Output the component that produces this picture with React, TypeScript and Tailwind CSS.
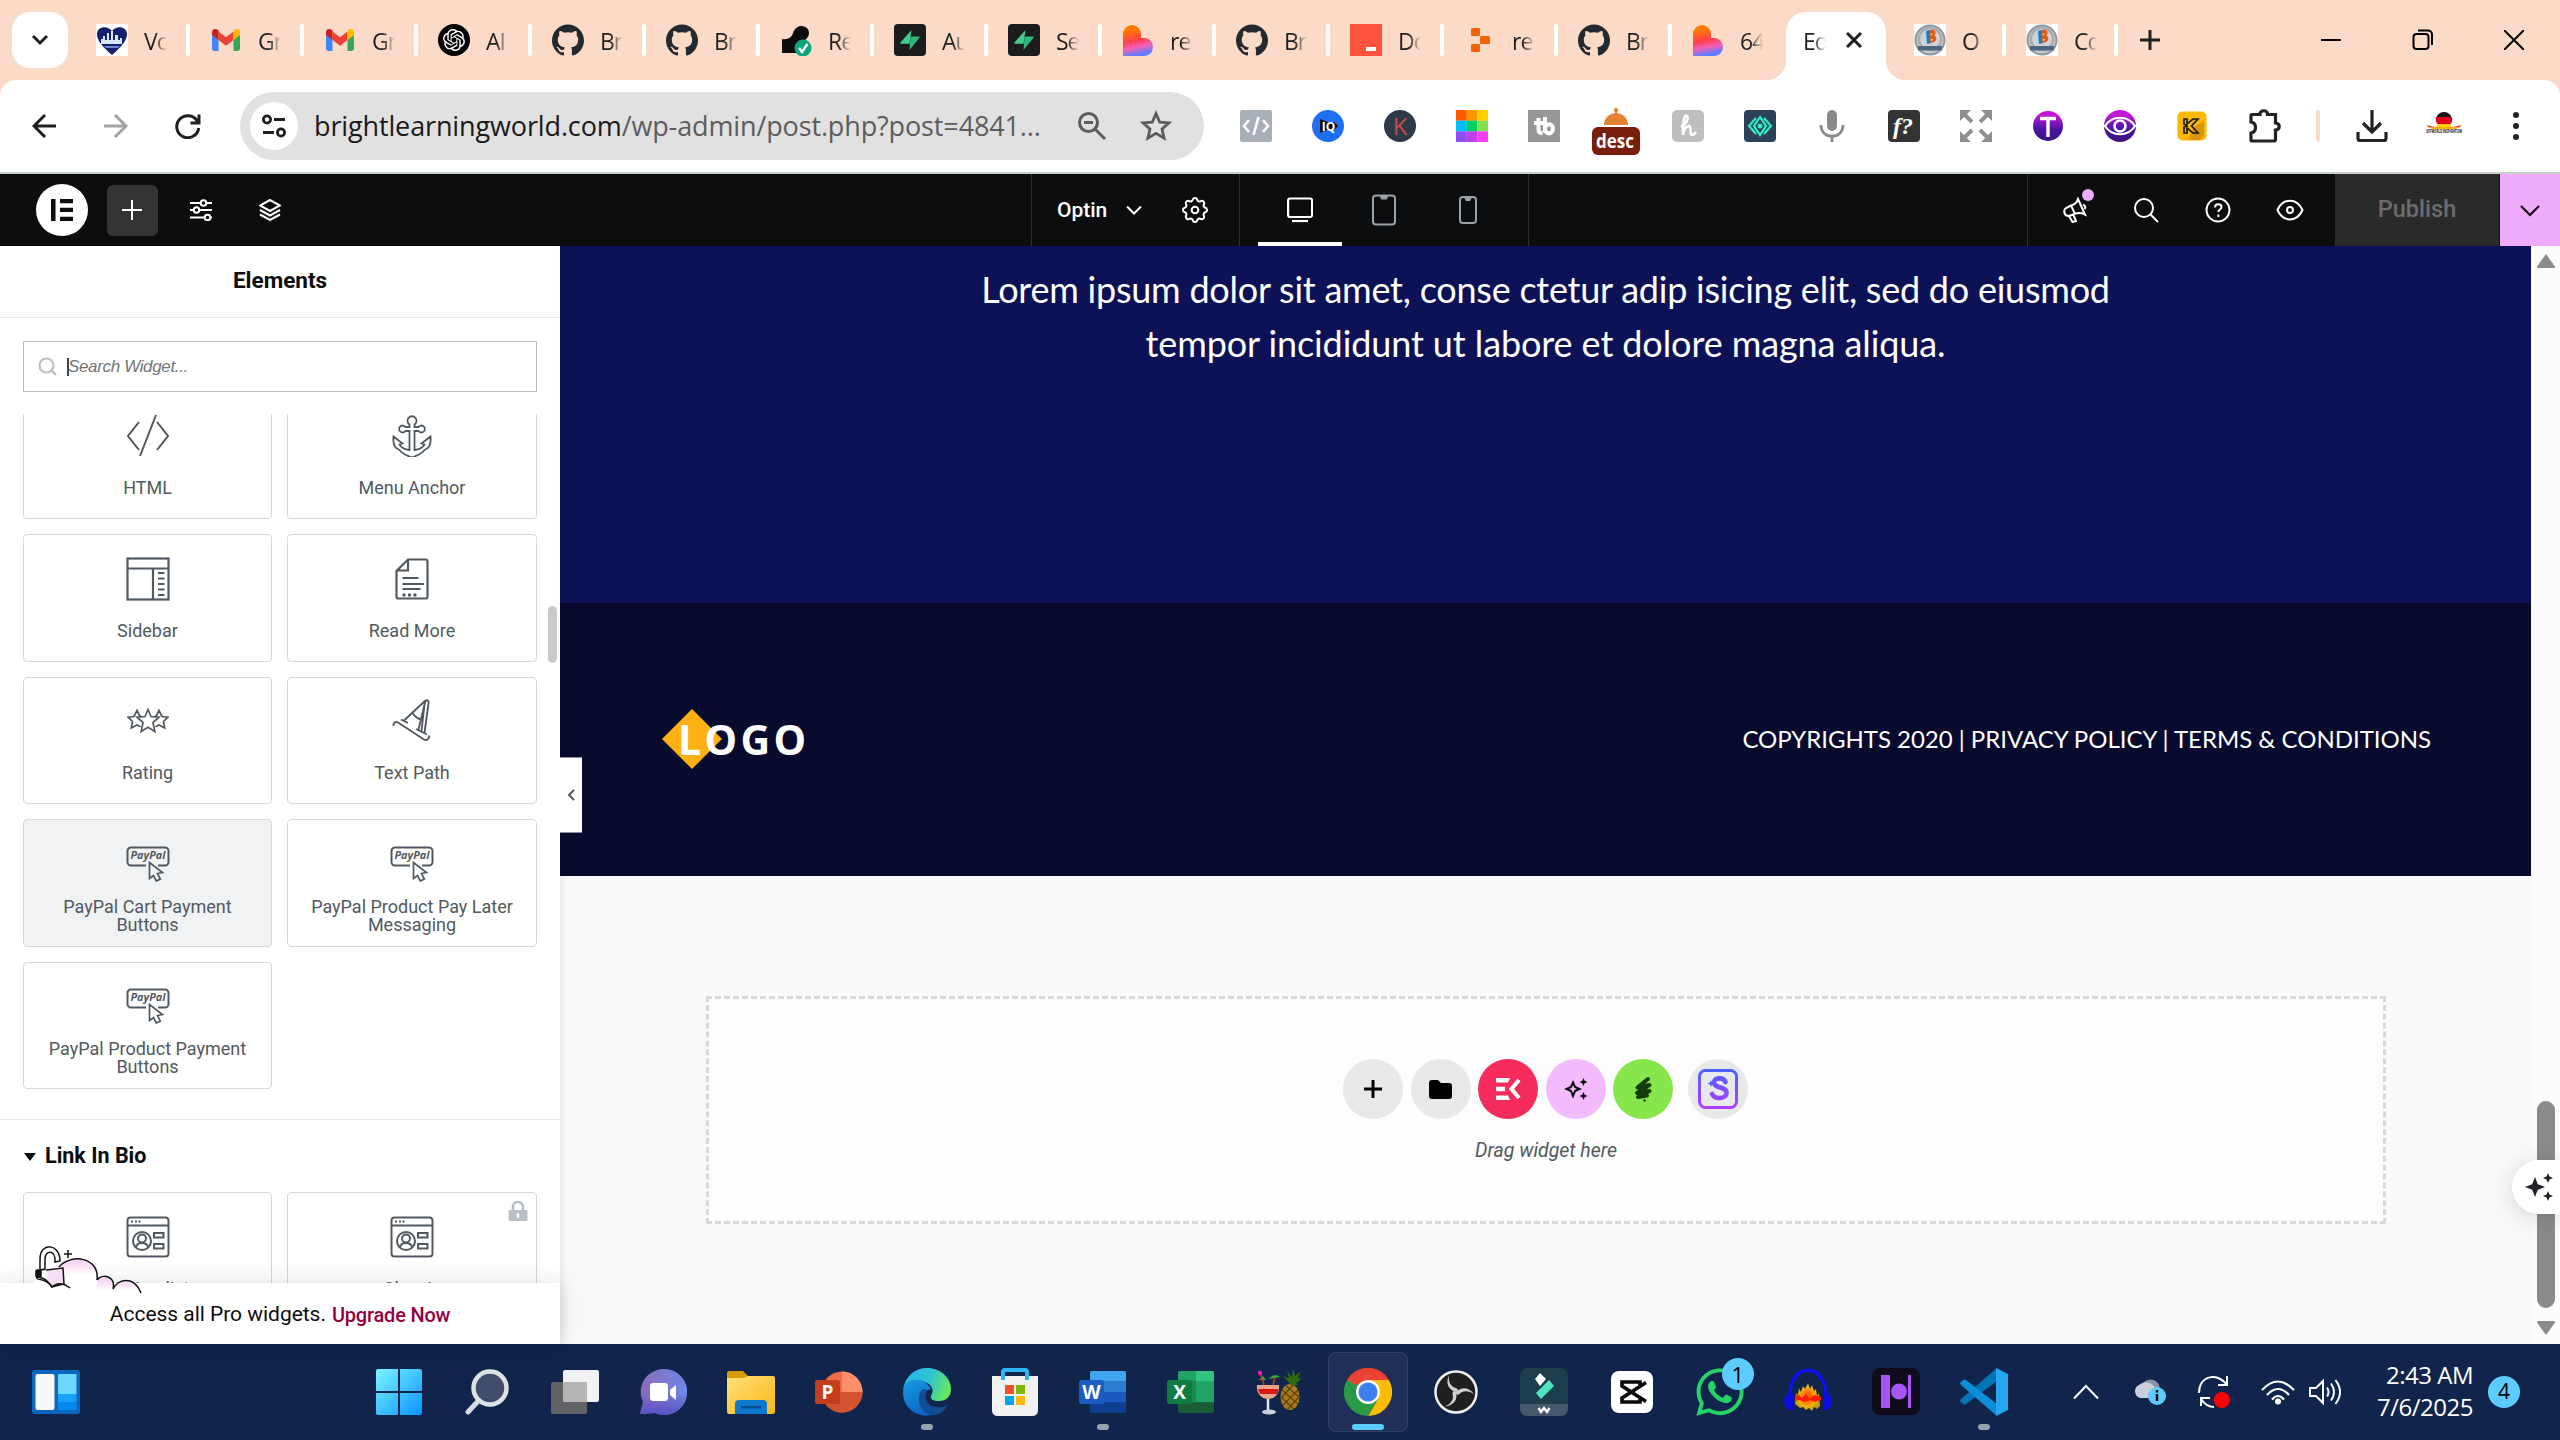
import React from 'react';
import { SiGithub, SiOpenai } from 'react-icons/si';
import { FaWhatsapp } from 'react-icons/fa';

type Kids = { children?: React.ReactNode };

const UI = "font-['Open_Sans','Noto_Sans',sans-serif]";
const ROBOTO = 'font-[Roboto,sans-serif]';

/* Square drawing with a viewBox equal to its pixel size. */
function Svg({ w, h = w, vb, children, sw = 2, stroke = 'none', fill = 'none' }: { w: number; h?: number; vb?: string; sw?: number; stroke?: string; fill?: string } & Kids) {
  return (
    <svg className="block shrink-0" width={w} height={h} viewBox={vb ?? `0 0 ${w} ${h}`} fill={fill} stroke={stroke} strokeWidth={sw}>
      {children}
    </svg>
  );
}

/* ---------- favicons ---------- */
const Heart = () => (
  <Svg w={32}>
    <rect width="32" height="32" fill="#fff" />
    <path d="M16 31C8 24 1 17 1 10 1 2 12 1 16 7c4-6 15-5 15 3 0 7-7 14-15 21z" fill="#14206b" />
    <path d="M5 20v-5h2v-3h2v4h2V9h2v7h2V7h2v9h2v-5h3v5h2v-2h2v6z" fill="#d9e6fb" />
    <path d="M8 22h16l-2 2H10z" fill="#6f8bd0" />
  </Svg>
);
const Gmail = () => (
  <Svg w={32}>
    <path d="M2 10v14.500c0 1.400 1 2.500 2.400 2.500H8.500V15z" fill="#4285f4" />
    <path d="M30 10v14.500c0 1.400-1 2.500-2.400 2.500H23.500V15z" fill="#34a853" />
    <path d="M8.500 7.500L16 13.200l7.500-5.700V16L16 21.700 8.500 16z" fill="#ea4335" />
    <path d="M2 8.500C2 5 5.500 4.200 8 6l.5.500V16L2 11z" fill="#c5221f" />
    <path d="M30 8.500C30 5 26.500 4.200 24 6l-.5.500V16L30 11z" fill="#fbbc04" />
  </Svg>
);
const OpenAi = () => (
  <div className="flex size-8 items-center justify-center rounded-full bg-black">
    <SiOpenai size={22} color="#fff" />
  </div>
);
const Github = () => <SiGithub size={32} color="#24292f" className="shrink-0" />;
const Replit = () => (
  <Svg w={32}>
    <path d="M2 15c6 1 10-2 11-6 2-5 5-7 8-7 5 0 8 3 8 7 0 5-4 6-5 9-1 4-2 6-3 11H2z" fill="#0b0b0b" />
    <circle cx="23" cy="24" r="8.500" fill="#0fa67f" />
    <path d="M19 24l3 4 5.500-8" stroke="#fff" strokeWidth="2.400" />
  </Svg>
);
const Supabase = () => (
  <Svg w={32}>
    <rect width="32" height="32" rx="4" fill="#1c1c1c" />
    <path d="M17.500 6L6.500 18.500c-.5.700 0 1.300.8 1.300h8.200z" fill="#3ecf8e" />
    <path d="M15.500 26l10-12.300c.5-.7 0-1.300-.8-1.300h-8.200z" fill="#31b77a" />
  </Svg>
);
const Lovable = () => (
  <Svg w={32}>
    <defs>
      <linearGradient id="lov" x1="0.3" y1="0" x2="0.500" y2="1">
        <stop offset="0.150" stopColor="#ff7a00" />
        <stop offset="0.500" stopColor="#ff3f4f" />
        <stop offset="0.720" stopColor="#f45fb8" />
        <stop offset="0.950" stopColor="#5f7dff" />
      </linearGradient>
    </defs>
    <path d="M1 10a9 9 0 0 1 18 0v4h3c5 0 9 4 9 9s-4 9-9 9H1z" fill="url(#lov)" />
  </Svg>
);
const Docs = () => (
  <Svg w={32}>
    <rect width="32" height="32" fill="#ff533d" />
    <rect x="16" y="23" width="10" height="4" fill="#fff" />
  </Svg>
);
const Rep2 = () => (
  <Svg w={32} fill="#f26207">
    <rect x="7" y="4" width="9" height="8" rx="1.500" />
    <rect x="16" y="12" width="10" height="8" rx="1.500" />
    <rect x="7" y="20" width="9" height="8" rx="1.500" />
  </Svg>
);
const Bright = () => (
  <Svg w={32}>
    <rect width="32" height="32" fill="#fff" />
    <circle cx="16" cy="16" r="14.500" fill="#c3c6ca" stroke="#8f959c" strokeWidth="2" />
    <circle cx="16" cy="15" r="11" fill="#cfd2d6" stroke="#a3a8ae" />
    <path d="M13 7l5-1.500c4 0 4.500 4 2 6 3.500 1 3 6-1.500 7l-5 1z" fill="#e2571f" />
    <path d="M12 7l3.500-1 1 13-3.500 1z" fill="#1b7fc4" />
    <path d="M16.500 9l2.500 1-2.500 2zM16.500 14.500l3 1-2.500 2z" fill="#f7c519" />
    <rect x="4" y="22" width="24" height="4.500" fill="#4d6580" />
  </Svg>
);

const tabs: [() => React.ReactElement, string][] = [
  [Heart, 'Vo'], [Gmail, 'Gr'], [Gmail, 'Gr'], [OpenAi, 'AI'], [Github, 'Br'], [Github, 'Br'], [Replit, 'Re'], [Supabase, 'Au'],
  [Supabase, 'Se'], [Lovable, 're'], [Github, 'Br'], [Docs, 'Do'], [Rep2, 're'], [Github, 'Br'], [Lovable, '64'],
];

function TabText({ children }: Kids) {
  return (
    <span className="block w-[23px] shrink-0 overflow-hidden text-[23px] leading-8 tracking-[-1px] whitespace-nowrap text-[#1f1f1f] [mask-image:linear-gradient(to_right,black_45%,transparent)]">
      {children}
    </span>
  );
}

function TabStrip() {
  return (
    <div className={`flex h-20 bg-[#fcdac8] pl-3 ${UI}`}>
      <div className="mt-3 flex size-14 items-center justify-center rounded-[18px] bg-white">
        <Svg w={20} stroke="#1f1f1f" sw={3}><path d="M3 6l7 7 7-7" /></Svg>
      </div>
      <div className="ml-2 flex">
        {tabs.map(([Icon, label], i) => (
          <div key={i} className="flex h-20 w-[114px] items-center pl-5">
            <Icon />
            <span className="ml-4 pt-[2px]"><TabText>{label}</TabText></span>
            {i < 14 && <span className="ml-auto h-8 w-1 rounded-sm bg-white" />}
          </div>
        ))}
      </div>
      <div className="relative mt-3 flex h-[68px] w-[100px] items-center rounded-t-[20px] bg-white pb-3 pl-[17px]">
        <span className="absolute bottom-0 -left-5 size-5 bg-[radial-gradient(circle_at_0_0,transparent_20px,white_20.500px)]" />
        <span className="absolute -right-5 bottom-0 size-5 bg-[radial-gradient(circle_at_100%_0,transparent_20px,white_20.500px)]" />
        <span className="pt-[2px]"><TabText>Ed</TabText></span>
        <span className="ml-5"><Svg w={16} stroke="#1f1f1f" sw={3}><path d="M1 1l14 14M15 1L1 15" /></Svg></span>
      </div>
      <div className="flex h-20 w-[120px] items-center pl-7">
        <Bright /><span className="ml-4 pt-[2px]"><TabText>O</TabText></span>
        <span className="ml-auto h-8 w-1 rounded-sm bg-white" />
      </div>
      <div className="flex h-20 w-[112px] items-center pl-5">
        <Bright /><span className="ml-4 pt-[2px]"><TabText>Co</TabText></span>
        <span className="ml-auto h-8 w-1 rounded-sm bg-white" />
      </div>
      <div className="flex h-20 w-16 items-center justify-center">
        <Svg w={22} stroke="#1f1f1f" sw={3}><path d="M11 1v20M1 11h20" /></Svg>
      </div>
      <div className="ml-auto flex h-20 items-center">
        <span className="flex w-[92px] justify-center"><Svg w={20} stroke="#000" sw={2}><path d="M0 10h20" /></Svg></span>
        <span className="flex w-[91px] justify-center">
          <Svg w={22} stroke="#000" sw={2}><rect x="1.500" y="5" width="15" height="15" rx="3" /><path d="M6 1.500h10a4 4 0 0 1 4 4V16" /></Svg>
        </span>
        <span className="flex w-[92px] justify-center"><Svg w={20} stroke="#000" sw={2}><path d="M0 0l20 20M20 0L0 20" /></Svg></span>
      </div>
    </div>
  );
}

/* ---------- extension icons ---------- */
const letter = (x: number, y: number, size: number, fill: string, t: string, extra: object = {}) => (
  <text x={x} y={y} fontSize={size} fill={fill} stroke="none" textAnchor="middle" fontWeight="700" fontFamily="Open Sans, sans-serif" {...extra}>{t}</text>
);

const extensions: React.ReactElement[] = [
  <Svg w={32}><rect width="32" height="32" rx="2" fill="#a9afb9" /><path d="M9 10l-5 6 5 6M23 10l5 6-5 6M18.500 7l-5 18" stroke="#fff" strokeWidth="2.600" /></Svg>,
  <Svg w={32}><circle cx="16" cy="16" r="16" fill="#1f6ff2" /><path d="M8 9l7 3h7l4 4-4 4h-7l-7 3z" fill="#0b0b0b" />{letter(16.5, 20.5, 12, '#fff', 'IQ')}</Svg>,
  <Svg w={32}><circle cx="16" cy="16" r="16" fill="#2d3a4a" />{letter(16, 24.5, 24, '#c94a4a', 'K', { fontWeight: 400 })}</Svg>,
  <Svg w={32}>
    {['#ff5a00', '#ff9500', '#ffd000', '#00bfff', '#00cf63', '#82e350', '#8f4fff', '#c63df0', '#ff3df5'].map((c, i) => (
      <rect key={c} x={(i % 3) * 10.67} y={Math.floor(i / 3) * 10.67} width="10.800" height="10.800" fill={c} />
    ))}
  </Svg>,
  <Svg w={32}><rect width="32" height="32" fill="#979797" /><path d="M10.500 8v12q0 3 4 3M6 13h9M17 7v15.500M17 18a4 4.500 0 1 1 0 1.500" stroke="#fff" strokeWidth="4" /></Svg>,
  <Svg w={48} h={48}>
    <path d="M12 18a12 12 0 0 1 24 0z" fill="#e38332" /><circle cx="24" cy="3" r="2.200" fill="#e38332" /><path d="M24 3v6" stroke="#e38332" strokeWidth="2" />
    <rect x="0" y="20" width="48" height="28" rx="6" fill="#7a1e0c" />{letter(23, 40.5, 20, '#fff', 'desc', { textLength: 38, lengthAdjust: 'spacingAndGlyphs' })}
  </Svg>,
  <Svg w={32}><rect width="32" height="32" rx="5" fill="#bebebe" /><path d="M9 17c5-3 8-8 6-11-3-2-4 6-4 19 1-6 3-9 6-9s0 9 3 9c2 0 3-2 4-3" stroke="#fff" strokeWidth="2.600" /></Svg>,
  <Svg w={32}><rect width="32" height="32" rx="4" fill="#2d4159" /><path d="M12 8l-7 8 7 8M20 8l7 8-7 8M16 7l-6 9 6 9 6-9z" stroke="#2ff0c4" strokeWidth="2.200" /><circle cx="16" cy="16" r="2.500" fill="#2ff0c4" /></Svg>,
  <Svg w={32}><rect x="11" y="0" width="10" height="21" rx="5" fill="#8a8a8a" /><path d="M5 15c0 15 22 15 22 0M16 26v6" stroke="#8a8a8a" strokeWidth="2.800" /></Svg>,
  <Svg w={32}><rect width="32" height="32" rx="4" fill="#333" />{letter(15, 24, 24, '#fff', 'f?', { fontStyle: 'italic', fontFamily: 'Liberation Serif, serif' })}</Svg>,
  <Svg w={32} stroke="#8f8f8f" sw={4}><path d="M3 3l9 9M29 3l-9 9M3 29l9-9M29 29l-9-9" /><path d="M0 0h11L0 11zM32 0H21l11 11zM0 32h11L0 21zM32 32H21l11-11z" fill="#8f8f8f" stroke="none" /></Svg>,
  <Svg w={32}>
    <defs><linearGradient id="pur" x1="0" y1="0" x2="0" y2="1"><stop offset="0.150" stopColor="#c316d6" /><stop offset="0.600" stopColor="#4a17a0" /><stop offset="1" stopColor="#3b1080" /></linearGradient></defs>
    <circle cx="16" cy="16" r="15" fill="url(#pur)" /><path d="M8 8.500h16M16 8v19" stroke="#fff" strokeWidth="3.400" />
  </Svg>,
  <Svg w={32}><circle cx="16" cy="16" r="16" fill="url(#pur)" /><path d="M1 16c7-11 23-11 30 0-7 11-23 11-30 0z" stroke="#fff" strokeWidth="2.200" /><circle cx="16" cy="16" r="5.500" stroke="#fff" strokeWidth="2.600" /></Svg>,
  <Svg w={32}><rect x="1.500" y="1.500" width="29" height="29" rx="5" fill="#ffb700" /><path d="M18 17l10-6v15l-4 4H12z" fill="#d99600" /><path d="M8 9h3v5l6-5h5l-6.500 7 6.500 7h-5l-6-5v5H8v-6l3-1-3-2z" stroke="#1a1a1a" strokeWidth="1.700" /></Svg>,
  <Svg w={36} stroke="#1f2328" sw={3.200}><path d="M6 6.500h8c-.5-5 8-5 7.500 0h8V15c5 0 5 7 0 7v9.500a1.500 1.500 0 0 1-1.500 1.500H6a1 1 0 0 1-1-1v-7c6-1 6-10 0-11V7.500a1 1 0 0 1 1-1z" /></Svg>,
];

function Toolbar() {
  return (
    <div className="bg-[#fcdac8]">
      <div className="flex h-[94px] items-center rounded-t-[16px] border-b-2 border-[#c8d0ca] bg-white pl-2">
        <span className="flex w-[72px] justify-center"><Svg w={24} stroke="#1f1f1f" sw={3}><path d="M13 1L2 12l11 11M2 12h22" /></Svg></span>
        <span className="flex w-[72px] justify-center"><Svg w={24} stroke="#a3a3a3" sw={3}><path d="M11 1l11 11-11 11M22 12H0" /></Svg></span>
        <span className="flex w-[72px] justify-center"><Svg w={26} stroke="#1f1f1f" sw={3}><path d="M22.500 8.500A11 11 0 1 0 23.700 15M24 1.500v8.500h-8.500" /></Svg></span>
        <div className={`ml-4 flex h-[68px] w-[964px] items-center rounded-full bg-[#e1e1e1] pl-[10px] ${UI}`}>
          <span className="flex size-12 items-center justify-center rounded-full bg-white">
            <Svg w={24} stroke="#1f1f1f" sw={2.800}><circle cx="5" cy="5.500" r="3.600" /><path d="M12 5.500h11M1 18.500h11" /><circle cx="19" cy="18.500" r="3.600" /></Svg>
          </span>
          <span className="ml-4 w-[731px] text-[27px] leading-9 tracking-[-0.130px] whitespace-nowrap text-[#5c5c5c]">
            <span className="text-[#1a1a1a]">brightlearningworld.com</span>/wp-admin/post.php?post=4841...
          </span>
          <span className="ml-auto flex w-16 shrink-0 justify-center"><Svg w={30} stroke="#5c5c5c" sw={3}><circle cx="11.500" cy="11.500" r="9" /><path d="M18 18l10 10M7 11.500h9" /></Svg></span>
          <span className="mr-4 flex w-16 shrink-0 justify-center"><Svg w={32} stroke="#5c5c5c" sw={2.800}><path d="M16 3.500l3.700 8.600 9.300.8-7 6.200 2.100 9.100-8.100-4.900-8.100 4.900L10 19.100l-7-6.200 9.300-.8z" /></Svg></span>
        </div>
        <div className="ml-4 flex items-center">
          {extensions.map((e, i) => (
            <span key={i} className={i === 5 ? 'flex w-[72px] justify-center pt-[9px]' : 'flex w-[72px] justify-center'}>{e}</span>
          ))}
        </div>
        <span className="mx-4 h-8 w-1 rounded-sm bg-[#fcdac8]" />
        <span className="flex w-[72px] justify-center"><Svg w={32} stroke="#1f2328" sw={3.200}><path d="M16 0v22M7 13l9 9 9-9M2 22v6.500a2 2 0 0 0 2 2h24a2 2 0 0 0 2-2V22" /></Svg></span>
        <span className="flex w-[72px] justify-center">
          <Svg w={38} h={32}>
            <path d="M11 10a8 8 0 0 1 16 0z" fill="#151515" /><path d="M11 7h16q1 6-3 8H14q-4-2-3-8z" fill="#e3001b" /><path d="M13 14h12l2 4H11z" fill="#ffce00" />
            <path d="M1 15q10 2.500 18 2.500T37 15l-3 2.500H4z" fill="#e3372b" /><path d="M4 17q15 2 30 0l-3 2H7z" fill="#f7b500" />
            <text x="19" y="23" fontSize="4.500" fontWeight="700" textAnchor="middle" fill="#222" fontFamily="Roboto" textLength="36" lengthAdjust="spacingAndGlyphs">OFFWORLD INSPIRATION</text>
          </Svg>
        </span>
        <span className="flex w-[72px] justify-center"><Svg w={6} h={28} fill="#1f2328"><circle cx="3" cy="3" r="3" /><circle cx="3" cy="14" r="3" /><circle cx="3" cy="25" r="3" /></Svg></span>
      </div>
    </div>
  );
}

/* ---------- Elementor top bar ---------- */
function EditorBar() {
  return (
    <div className={`flex h-[72px] bg-[#0c0d0e] ${ROBOTO}`}>
      <div className="flex w-[1031px] items-center pl-9">
        <div className="flex size-[52px] items-center justify-center rounded-full bg-white">
          <Svg w={24} fill="#0c0d0e"><path d="M1 1h4.500v22H1zM10 1h13v4.300H10zM10 9.800h13v4.300H10zM10 18.700h13V23H10z" /></Svg>
        </div>
        <div className="ml-[19px] flex size-[51px] items-center justify-center rounded-md bg-[#333436] pr-px">
          <Svg w={20} stroke="#fff" sw={2}><path d="M10 0v20M0 10h20" /></Svg>
        </div>
        <span className="ml-8">
          <Svg w={22} stroke="#fff" sw={2}>
            <path d="M0 4h10M17 4h5M0 11h3M10 11h12M0 18.500h14M21 18.500h1" /><circle cx="13.500" cy="4" r="2.800" /><circle cx="6.500" cy="11" r="2.800" /><circle cx="17.500" cy="18.500" r="2.800" />
          </Svg>
        </span>
        <span className="ml-[47px]"><Svg w={22} stroke="#fff" sw={2}><path d="M11 1L1 6.500 11 12l10-5.500zM1 11l10 5.500L21 11M1 15.500L11 21l10-5.500" /></Svg></span>
      </div>
      <div className="flex w-[208px] items-center border-l border-[#2c2d2f] pl-[25px]">
        <span className="w-[69px] pt-px text-[21px] font-medium text-white">Optin</span>
        <Svg w={16} stroke="#fff" sw={2}><path d="M1 4.500l7 7 7-7" /></Svg>
        <span className="ml-[37px]">
          <Svg w={32} vb="0 0 24 24" stroke="#fff" sw={1.500}>
            <path d="M10.300 3.300c.4-1.700 3-1.700 3.400 0a1.700 1.700 0 0 0 2.600 1.100c1.500-1 3.300.8 2.400 2.400a1.700 1.700 0 0 0 1 2.500c1.800.4 1.800 3 0 3.400a1.700 1.700 0 0 0-1 2.600c.9 1.500-.9 3.300-2.400 2.400a1.700 1.700 0 0 0-2.600 1c-.4 1.800-3 1.800-3.400 0a1.700 1.700 0 0 0-2.600-1c-1.500.9-3.300-.9-2.400-2.400a1.700 1.700 0 0 0-1-2.600c-1.800-.4-1.800-3 0-3.400a1.700 1.700 0 0 0 1-2.600c-.9-1.500.9-3.300 2.400-2.400 1 .6 2.300.1 2.600-1z" transform="translate(0 1)" />
            <circle cx="12" cy="12" r="2.500" />
          </Svg>
        </span>
      </div>
      <div className="flex w-[290px] border-x border-[#2c2d2f] pl-[18px]">
        <span className="flex w-[84px] items-center justify-center border-b-4 border-white pt-1">
          <Svg w={26} stroke="#fff" sw={2.200}><rect x="1.100" y="1.500" width="24" height="18.500" rx="2" /><path d="M5 24h16" /></Svg>
        </span>
        <span className="flex w-[84px] items-center justify-center"><Svg w={24} h={32} stroke="#9da0a3" sw={2}><rect x="1" y="1.500" width="22" height="29" rx="3" /><path d="M9 2.500h6l-1 2h-4z" fill="#9da0a3" /></Svg></span>
        <span className="flex w-[84px] items-center justify-center"><Svg w={18} h={28} stroke="#9da0a3" sw={2}><rect x="1" y="1" width="16" height="26" rx="3" /><path d="M6.500 2h5l-1 2h-3z" fill="#9da0a3" /></Svg></span>
      </div>
      <div className="ml-auto flex border-l border-[#2c2d2f]">
        <div className="relative ml-[10px] flex w-[72px] items-center justify-center pl-[2px]">
          <Svg w={26} stroke="#fff" sw={2}><path d="M16 2l7 15.500c-5-2.500-9-1.500-13 .5L6 19c-4-.5-5-6-2-8l5-2.500c4-1 6-3 7-6.500zM9 8.500l4 8.500M7 19l3.500 6 3.500-1-2.500-6M21 8c2 0 3 2.500 1.500 4" /></Svg>
          <span className="absolute top-[15px] left-[44px] size-3 rounded-full bg-[#f0abfc]" />
        </div>
        <div className="flex w-[72px] items-center justify-center"><Svg w={26} stroke="#fff" sw={2}><circle cx="11" cy="11" r="9" /><path d="M17.500 17.500L25 25" /></Svg></div>
        <div className="flex w-[72px] items-center justify-center"><Svg w={26} stroke="#fff" sw={2}><circle cx="13" cy="13" r="11.500" /><path d="M10 10.500c0-4.500 6.500-4 6.500-.5 0 2.500-3.200 2.500-3.200 5M13.300 17.500V20" /></Svg></div>
        <div className="mr-[9px] flex w-[72px] items-center justify-center"><Svg w={28} h={22} stroke="#fff" sw={2}><path d="M1.500 11C7-1.500 21-1.500 26.500 11 21 23.500 7 23.500 1.500 11z" /><circle cx="14" cy="11" r="3" /></Svg></div>
        <div className="flex w-[164px] items-center justify-center bg-[#2a2a2b] text-[23.500px] font-medium text-[#6b6d6f]">Publish</div>
        <div className="ml-px flex w-[60px] items-center justify-center bg-[#f0abfc]"><Svg w={22} stroke="#0c0d0e" sw={2.200}><path d="M2 7l9 9 9-9" /></Svg></div>
      </div>
    </div>
  );
}

/* ---------- widget panel ---------- */
const INK = '#515962';
const HtmlIcon = () => <Svg w={44} stroke={INK} sw={2}><path d="M13 8L2 22l11 14M31 8l11 14-11 14M30 1L14 42" /></Svg>;
const AnchorIcon = () => (
  <Svg w={42} stroke={INK} sw={1.800}>
    <path d="M18.500 9.500a4.500 4.500 0 1 1 5 0V12h4a3.500 3.500 0 1 1 0 4h-4v19c5-.5 8-2 10-5.500l-3-1 9-7c1 9-2 12-6 13.500-3 4-7 5.500-12.500 7.500C15.500 40.500 11.500 39 8.500 35 4.500 33.500 1.500 30.500 2.500 21.500l9 7-3 1c2 3.500 5 5 10 5.500V16h-4a3.500 3.500 0 1 1 0-4h4z" />
  </Svg>
);
const SidebarIcon = () => <Svg w={44} stroke={INK} sw={2.200}><rect x="1.500" y="1.500" width="41" height="41" /><path d="M1.500 11.500h41M27 11.500v31M32 16h6.500M32 21.500h6.500M32 27h6.500M32 32.500h6.500M32 38h6.500" /></Svg>;
const ReadMoreIcon = () => (
  <Svg w={34} h={42} stroke={INK} sw={2.200}>
    <path d="M13 1.500h17.500a2 2 0 0 1 2 2v35a2 2 0 0 1-2 2h-27a2 2 0 0 1-2-2V13zM13 1.500V12.500H1.500M7.500 20h16M7.500 26h21.500M7.500 31h18" />
    <g fill={INK} stroke="none"><circle cx="9" cy="37" r="1.700" /><circle cx="14.500" cy="37" r="1.700" /><circle cx="20" cy="37" r="1.700" /></g>
  </Svg>
);
const RatingIcon = () => (
  <Svg w={42} h={26} stroke={INK} sw={1.700}>
    <path d="M21 1.500l3 7 8 .7-6 5.300 1.800 9L21 19.300l-6.800 4.200 1.800-9-6-5.300 8-.7z" />
    <path d="M14 8l-1.500-.5-2.500-5-3 6-6 .7 4.500 4.300-1.200 6.500 5.700-3 3.500 1.700M28 8l1.500-.5 2.500-5 3 6 6 .7-4.500 4.300 1.200 6.500-5.700-3-3.500 1.700" />
  </Svg>
);
const TextPathIcon = () => (
  <Svg w={40} h={44} stroke={INK} sw={1.900}>
    <path d="M33.500 1.500L12 21.500M33.500 1.500l-7 29M33.500 1.500q3.500-1 3 3l-4 29.500M21 14.500q3 5 8.500 6M9 20.500l7 3.500M24 30l11 5.500M32.500 5l-3 27" />
    <path d="M1.500 27c-.5-3 2-5 4.500-3.500l26 17c3 1.500 5-.5 5.500-4" />
  </Svg>
);
const PayPalIcon = () => (
  <Svg w={44} h={36} stroke={INK} sw={2}>
    <path d="M20 19.500H5a3.500 3.500 0 0 1-3.500-3.500V5A3.500 3.500 0 0 1 5 1.500h34A3.500 3.500 0 0 1 42.500 5v11a3.500 3.500 0 0 1-3.500 3.500H32" />
    <path d="M23.500 16.500v16l4-3 2.800 5.500 4-2-2.800-5.500 5-1z" strokeWidth="1.700" />
    <text x="22" y="13" fontSize="10.500" fontWeight="700" fontStyle="italic" textAnchor="middle" fill={INK} stroke="none" fontFamily="Open Sans" textLength="35" lengthAdjust="spacingAndGlyphs">PayPal</text>
  </Svg>
);
const BioIcon = () => (
  <Svg w={44} h={42} stroke={INK} sw={2}>
    <rect x="1.500" y="1.500" width="41" height="39" rx="3" /><path d="M1.500 9.500h41M5 5.500h2M9 5.500h2M12.500 5.500h2" />
    <circle cx="16" cy="25" r="9" /><circle cx="16" cy="22.500" r="4" /><path d="M9.500 31.500c2-6 11-6 13 0" /><rect x="28" y="17" width="9.500" height="4.500" /><rect x="28" y="28" width="9.500" height="4.500" />
  </Svg>
);

function Card({ icon, label, active, locked }: { icon: React.ReactNode; label: string; active?: boolean; locked?: boolean }) {
  return (
    <div className={active ? 'relative flex flex-col items-center rounded-[4px] border border-[#d5d8dc] bg-[#f1f2f3] pt-[22.500px]' : 'relative flex flex-col items-center rounded-[4px] border border-[#d5d8dc] bg-white pt-[22.500px]'}>
      <div className="flex h-[42px] items-center justify-center">{icon}</div>
      <div className="mt-[13px] flex h-9 w-[214px] items-center justify-center text-center text-[18px] leading-[18px] text-[#515962]">{label}</div>
      {locked && (
        <span className="absolute top-[8px] right-2">
          <Svg w={20}><path d="M5 10V6a5 5 0 0 1 10 0v4" stroke="#b9bfc6" strokeWidth="2.500" /><rect x=".5" y="9" width="19" height="11" rx="1" fill="#b9bfc6" /><rect x="8.700" y="12" width="2.600" height="5" rx="1.300" fill="#fff" /></Svg>
        </span>
      )}
    </div>
  );
}

function Panel() {
  return (
    <aside className={`relative z-10 flex h-[1098px] w-[560px] shrink-0 flex-col bg-white shadow-[0_0_10px_rgba(0,0,0,0.12)] ${ROBOTO}`}>
      <div className="flex h-[72px] shrink-0 items-center justify-center border-b border-[#e6e8ea] pb-[2px] text-[22.500px] font-bold text-[#0c0d0e]">Elements</div>
      <div className="mx-[23px] mt-[23px] flex h-[51px] shrink-0 items-center border border-[#babfc5] pl-[14px]">
        <Svg w={19} stroke="#babfc5" sw={2.200}><circle cx="8.500" cy="8.500" r="7" /><path d="M13 13l5 5" /></Svg>
        <span className="ml-[10px] h-[18px] w-[2px] bg-[#3f444b]" />
        <span className="-ml-px font-['Liberation_Sans',sans-serif] text-[17px] tracking-[-0.350px] text-[#757575] italic">Search Widget...</span>
      </div>
      <div className="mt-[22px] h-[869px] overflow-hidden">
        <div className="-mt-[22.500px] grid auto-rows-[127.500px] grid-cols-[249px_250px] gap-[15px] px-[23px] pb-[30px]">
          <Card icon={<HtmlIcon />} label="HTML" />
          <Card icon={<AnchorIcon />} label="Menu Anchor" />
          <Card icon={<SidebarIcon />} label="Sidebar" />
          <Card icon={<ReadMoreIcon />} label="Read More" />
          <Card icon={<RatingIcon />} label="Rating" />
          <Card icon={<TextPathIcon />} label="Text Path" />
          <Card icon={<PayPalIcon />} label="PayPal Cart Payment Buttons" active />
          <Card icon={<PayPalIcon />} label="PayPal Product Pay Later Messaging" />
          <Card icon={<PayPalIcon />} label="PayPal Product Payment Buttons" />
        </div>
        <div className="flex h-[73px] items-center border-t border-[#e6e8ea] pt-px pl-6 text-[21.500px] font-bold text-[#0c0d0e]">
          <Svg w={12} h={8} fill="#0c0d0e"><path d="M0 0h12L6 8z" /></Svg>
          <span className="ml-[9px]">Link In Bio</span>
        </div>
        <div className="grid auto-rows-[127.500px] grid-cols-[249px_250px] gap-[15px] px-[23px]">
          <Card icon={<BioIcon />} label="Minimalist" />
          <Card icon={<BioIcon />} label="Classic" locked />
        </div>
      </div>
      <div className="relative flex h-[61px] shrink-0 items-center justify-center bg-white pt-[2px] text-[#0c0d0e] shadow-[0_0_24px_rgba(0,0,0,0.13)]">
        <span className="text-[21px] tracking-[-0.030px]">Access all Pro widgets.</span>
        <span className="ml-[6px] text-[20px] font-medium tracking-[-0.200px] text-[#93003f]">Upgrade Now</span>
        <span className="absolute -top-[38px] left-[32px]">
          <Svg w={114} h={50} stroke="#111" sw={1.500}>
            <defs>
              <linearGradient id="cloud" gradientUnits="userSpaceOnUse" x1="0" y1="12" x2="0" y2="30"><stop offset="0" stopColor="#f3c3f0" /><stop offset="1" stopColor="#fff" /></linearGradient>
              <linearGradient id="cloud2" gradientUnits="userSpaceOnUse" x1="0" y1="30" x2="0" y2="46"><stop offset="0" stopColor="#f3c3f0" /><stop offset="1" stopColor="#fff" /></linearGradient>
            </defs>
            <path d="M0 42C2 32 14 30 25 20 40 8 66 12 66 36V50H0z" fill="url(#cloud)" stroke="none" />
            <path d="M66 36c5-7 18-4 15 8 6-9 22-12 28 5H62z" fill="url(#cloud2)" stroke="none" />
            <path d="M27 22c12-14 41-10 38 13M65 35c5-7 19-4 16 9M81 44c5-10 21-14 28 4" />
            <path d="M8 25V14C8-3 28-2 28 16l-5 1C24 4 13 5 13 14v10z" fill="#fff" />
            <path d="M6 26l25-3 1 16-12 3c-3-5-8-7-14-8z" fill="#f6dff4" />
            <path d="M6 26l8-1 2 9-10 0z" fill="#fff" stroke="none" /><rect x="4" y="25" width="5" height="7" rx="1" fill="#111" />
            <path d="M4 33c8-2 12 4 16 9 5-5 12-4 18 1M36 5v8M32 9h8" />
          </Svg>
        </span>
      </div>
      <span className="absolute top-[360px] right-[3px] h-[57px] w-[9px] rounded-full bg-[#c9c9c9]" />
      <span className="absolute top-[511px] left-[560px] flex h-[76px] w-[22px] items-center justify-center border-y border-[#8b8da0] bg-white">
        <Svg w={8} h={12} stroke="#515962" sw={2}><path d="M7 1L2 6l5 5" /></Svg>
      </span>
    </aside>
  );
}

/* ---------- canvas ---------- */
function RoundButton({ className, children }: { className: string } & Kids) {
  return <span className={`flex size-[60px] items-center justify-center rounded-full ${className}`}>{children}</span>;
}

function Canvas() {
  return (
    <main className="flex w-[1971px] flex-col bg-[#faf8f9]">
      <section className="h-[357px] bg-[#0d1257] pt-4 text-center font-[Lato,sans-serif] text-[36px] leading-[54px] tracking-[-0.240px] text-white">
        <p>Lorem ipsum dolor sit amet, conse ctetur adip isicing elit, sed do eiusmod</p>
        <p className="tracking-[-0.100px]">tempor incididunt ut labore et dolore magna aliqua.</p>
      </section>
      <section className="flex h-[273px] items-center justify-between bg-[#080b2d] pr-[100px] pb-[2px] pl-[102px] text-white">
        <div className="relative flex h-[60px] items-center">
          <Svg w={60}><path d="M30 0l30 30-30 30L0 30z" fill="#ffb013" /></Svg>
          <span className="absolute left-[16px] font-['Open_Sans',sans-serif] text-[41px] leading-[60px] font-bold tracking-[3.300px]">LOGO</span>
        </div>
        <span className="font-[Lato,sans-serif] text-[24px] tracking-[-0.020px]">COPYRIGHTS 2020 | PRIVACY POLICY | TERMS &amp; CONDITIONS</span>
      </section>
      <section className={`mt-[120px] mr-[145px] ml-[146px] flex h-[228px] flex-col items-center border-[3px] border-dashed border-[#d5d8dc] bg-[#fdfdfd] pt-[60px] ${ROBOTO}`}>
        <div className="flex pr-[2px]">
          <RoundButton className="bg-[#e6e8ea]"><Svg w={18} stroke="#000" sw={3}><path d="M9 0v18M0 9h18" /></Svg></RoundButton>
          <RoundButton className="ml-2 bg-[#e6e8ea]"><Svg w={23} h={19} fill="#000"><path d="M3 0h6l3 3h8a3 3 0 0 1 3 3v10a3 3 0 0 1-3 3H3a3 3 0 0 1-3-3V3a3 3 0 0 1 3-3z" /></Svg></RoundButton>
          <RoundButton className="ml-[7px] bg-[#f42b5b]"><Svg w={26} h={22} fill="#fff"><path d="M1 0h14l-2 4.500H1zM1 8.800h9v4.400H1zM1 17.500h12l2 4.500H1z" /><path d="M24 2l-7.500 9L24 20" stroke="#fff" strokeWidth="4" fill="none" /></Svg></RoundButton>
          <RoundButton className="ml-2 bg-[#f3bafd]"><Svg w={24} h={22} fill="#0c0d0e"><path d="M9 4.500l2 4.500 4.500 2L11 13l-2 5-2-5-4.500-2L7 9z" fill="none" stroke="#0c0d0e" strokeWidth="2" /><path d="M19.500 0l1.200 2.800L23.500 4l-2.800 1.200L19.500 8l-1.200-2.800L15.500 4l2.800-1.200zM19.500 14l1.200 2.800 2.800 1.200-2.800 1.200-1.200 2.800-1.200-2.800-2.800-1.200 2.800-1.200z" /></Svg></RoundButton>
          <RoundButton className="ml-[7px] bg-[#87e64b]"><Svg w={20} h={26} stroke="#143d0a" sw={4}><path d="M15 3L4.500 11.500 16.500 9 4 17l12.500-2L5 21l9-1.500" strokeLinecap="round" strokeLinejoin="round" /><circle cx="11.500" cy="24.500" r="1.200" fill="#143d0a" stroke="none" /></Svg></RoundButton>
          <RoundButton className="ml-[15px] bg-[#e6e8ea]">
            <Svg w={40}>
              <defs><linearGradient id="sg" gradientUnits="userSpaceOnUse" x1="0" y1="0" x2="0" y2="40"><stop offset="0" stopColor="#4763ff" /><stop offset="1" stopColor="#b43cff" /></linearGradient></defs>
              <rect x="1.500" y="1.500" width="37" height="37" rx="6" stroke="url(#sg)" strokeWidth="3" />
              <path d="M27.500 13c-2-5-12-5-11.500 1 1 6 12.500 3 12.500 10 0 6-11.500 7-14.500 1" stroke="url(#sg)" strokeWidth="4.600" strokeLinecap="round" />
              <path d="M13 11l1 2.500 2.500 1L14 15.500 13 18l-1-2.500L9.500 14.500l2.500-1z" fill="#4f5cff" />
            </Svg>
          </RoundButton>
        </div>
        <span className="mt-5 text-[19.500px] leading-6 text-[#515962] italic">Drag widget here</span>
      </section>
    </main>
  );
}

function Scrollbar() {
  return (
    <div className="relative flex w-[29px] flex-col items-center bg-[#fcfcfc] pt-2">
      <Svg w={18} h={14} fill="#8b8b8b"><path d="M9 0l9 12.500q0 1.500-1.500 1.500h-15Q0 14 0 12.500z" /></Svg>
      <span className="mt-[833px] h-[207px] w-[18px] rounded-full bg-[#8b8b8b]" />
      <span className="mt-[13px]"><Svg w={18} h={14} fill="#8b8b8b"><path d="M9 14L0 1.500Q0 0 1.500 0h15Q18 0 18 1.500z" /></Svg></span>
      <span className="absolute top-[914px] right-0 flex h-[54px] w-12 items-center rounded-l-full bg-white pl-[13px] shadow-[0_4px_24px_rgba(0,0,0,0.15)]">
        <Svg w={28} fill="#1f2124"><path d="M10 4l2.800 7.200L20 14l-7.200 2.800L10 24l-2.800-7.200L0 14l7.200-2.800zM23 0l1.500 3.500L28 5l-3.500 1.500L23 10l-1.500-3.500L18 5l3.500-1.500zM23 18l1.500 3.500L28 23l-3.500 1.500L23 28l-1.500-3.500L18 23l3.500-1.500z" /></Svg>
      </span>
    </div>
  );
}

/* ---------- taskbar ---------- */
function OfficeTile({ colors, box, mark, round }: { colors: string[]; box: string; mark: string; round?: boolean }) {
  return (
    <Svg w={48}>
      <defs><clipPath id={`of${mark}`}>{round ? <circle cx="27" cy="24" r="20.500" /> : <rect x="11" y="3" width="36" height="42" rx="2" />}</clipPath></defs>
      <g clipPath={`url(#of${mark})`}>
        {round ? (
          <><rect width="48" height="48" fill={colors[0]} /><rect x="27" width="21" height="24" fill={colors[1]} /><rect y="24" width="48" height="24" fill={colors[2]} /></>
        ) : (
          colors.slice(0, 4).map((c, i) => <rect key={c} x="11" y={3 + i * 10.500} width="36" height="10.600" fill={c} />)
        )}
        {mark === 'X' && <><rect x="29" y="3" width="18" height="10.500" fill="#33c481" /><rect x="11" y="13.500" width="18" height="21" fill="#107c41" opacity=".6" /></>}
      </g>
      <rect x="0" y="12" width="25" height="24" rx="2.500" fill={box} />
      {letter(12.5, 31, 19, '#fff', mark)}
    </Svg>
  );
}

type Slot = { icon: React.ReactNode; dot?: boolean; active?: boolean };
const slots: Slot[] = [
  {
    icon: (
      <Svg w={46}>
        <defs><linearGradient id="win" gradientUnits="userSpaceOnUse" x1="0" y1="0" x2="46" y2="46"><stop offset="0" stopColor="#7bf5ff" /><stop offset="1" stopColor="#0a93ff" /></linearGradient></defs>
        <path d="M2 0h20v22H0V2q0-2 2-2zM24 0h20q2 0 2 2v20H24zM0 24h22v22H2q-2 0-2-2zM24 24h22v20q0 2-2 2H24z" fill="url(#win)" />
      </Svg>
    ),
  },
  { icon: <Svg w={46}><path d="M16 30L4 43" stroke="#d7dade" strokeWidth="5" strokeLinecap="round" /><circle cx="26" cy="19" r="16.500" fill="#414c6f" stroke="#dfe2e4" strokeWidth="4.500" /></Svg> },
  { icon: <Svg w={48} h={44}><rect x="12" y="0" width="36" height="32" rx="2" fill="#f1f1f1" /><rect x="0" y="12" width="36" height="32" rx="2" fill="#626366" /><rect x="12" y="12" width="24" height="20" fill="#b5b5b6" /></Svg> },
  {
    icon: (
      <Svg w={48}>
        <defs><linearGradient id="meet" x1="0" y1="0.500" x2="1" y2="0.400"><stop offset="0" stopColor="#8a6bb8" /><stop offset="1" stopColor="#6f86e6" /></linearGradient><linearGradient id="meet2" x1="0" y1="0" x2="0" y2="1"><stop offset=".5" stopColor="#5558c9" stopOpacity="0" /><stop offset="1" stopColor="#5a4fc8" /></linearGradient></defs>
        <path d="M24 1a23 23 0 1 1-8 44L1 46l3-12A23 23 0 0 1 24 1z" fill="url(#meet)" /><path d="M24 1a23 23 0 1 1-8 44L1 46l3-12A23 23 0 0 1 24 1z" fill="url(#meet2)" />
        <rect x="11" y="15" width="18" height="18" rx="3" fill="#fff" /><path d="M31 22l6-5v15l-6-5z" fill="#fff" />
      </Svg>
    ),
  },
  {
    icon: (
      <Svg w={48}>
        <defs><linearGradient id="fold" x1="0" y1="0" x2="1" y2="1"><stop offset="0" stopColor="#ffe07a" /><stop offset="1" stopColor="#fbb916" /></linearGradient></defs>
        <path d="M0 5q0-2 2-2h14l5 5v5H0z" fill="#dc9a00" /><path d="M0 10h17l4-2h25q2 0 2 2v33q0 3-2 3H2q-2 0-2-3z" fill="url(#fold)" />
        <path d="M8 46V36q0-4 4-4h24q4 0 4 4v10z" fill="#0f78cf" /><rect x="14" y="38" width="20" height="2.500" fill="#0a4e94" />
      </Svg>
    ),
  },
  { icon: <OfficeTile mark="P" round colors={['#ed6c47', '#ff8f6b', '#d35230']} box="#c43e1c" /> },
  {
    dot: true,
    icon: (
      <Svg w={48}>
        <defs>
          <linearGradient id="e1" x1="0" y1="0.300" x2="1" y2="0.600"><stop offset="0" stopColor="#2bb4f4" /><stop offset="0.500" stopColor="#2cc3d2" /><stop offset="1" stopColor="#6be85a" /></linearGradient>
          <linearGradient id="e2" x1="0" y1="0" x2="0.500" y2="1"><stop offset="0" stopColor="#1b9de0" /><stop offset="1" stopColor="#0a64c8" /></linearGradient>
        </defs>
        <path d="M0 22C2 8 12 0 24 0c14 0 24 10 24 21 0 8-5 12-12 12-6 0-9-2-8-5 5-8-2-14-10-15C9 12 2 16 0 22z" fill="url(#e1)" />
        <path d="M0 24c0-8 6-12.500 13-12.500 8 0 12 4 15 10-6-1-10 5-8 11 2 7 9 11 14 12.500C20 52 0 44 0 24z" fill="url(#e2)" />
        <path d="M20 21c-7 5-6 26 12 26 6-1 10-5 13-10-8 4-19 3-22-5-1-4 0-8 2-10z" fill="#124d93" />
      </Svg>
    ),
  },
  {
    icon: (
      <Svg w={48}>
        <path d="M1 8h46v34q0 6-6 6H7q-6 0-6-6z" fill="#f1f1f1" /><path d="M12 12V4q0-2 2-2h20q2 0 2 2v8" stroke="#2fb5f5" strokeWidth="4" />
        <path d="M14 17h9v9h-9z" fill="#f25022" /><path d="M25 17h9v9h-9z" fill="#7fba00" /><path d="M14 28h9v9h-9z" fill="#00a4ef" /><path d="M25 28h9v9h-9z" fill="#ffb900" />
      </Svg>
    ),
  },
  { dot: true, icon: <OfficeTile mark="W" colors={['#41a5ee', '#2b7cd3', '#185abd', '#103f91']} box="#1c5bc0" /> },
  { icon: <OfficeTile mark="X" colors={['#21a366', '#21a367', '#21a365', '#185c37']} box="#107c41" /> },
  {
    icon: (
      <Svg w={48}>
        <ellipse cx="35" cy="29" rx="9.500" ry="13" fill="#a87a1b" /><path d="M27 22l16 14M26 29l13 12M30 17l14 12M43 22L28 37M44 29L32 42M38 17L26 30" stroke="#5e410c" strokeWidth="1.300" />
        <path d="M36 17L28 8l6 2-2-7 5 6 1-9 2 8 6-5-3 7 4 1-6 4 2 2z" fill="#2c6b12" />
        <path d="M2 17h22c1 8-4 14-11 14S1 25 2 17z" fill="#e8a58a" /><path d="M3 21h20v5H5z" fill="#d9170f" /><path d="M13 31v12" stroke="#e4e7ee" strokeWidth="2.500" /><ellipse cx="14" cy="44" rx="7" ry="2.500" fill="#c9cfdb" />
        <path d="M14 11q5-7 11-2zM4 12h7l-3-4z" fill="#27b53b" /><circle cx="5" cy="5" r="2.200" fill="#e71fb2" /><path d="M9 17l-3-10M18 17l2-8" stroke="#c33" strokeWidth="1.500" />
      </Svg>
    ),
  },
  {
    active: true,
    icon: (
      <Svg w={48}>
        <path d="M24 24L3.200 12A24 24 0 0 1 44.800 12z" fill="#ea4335" /><path d="M24 24h0L44.800 12A24 24 0 0 1 24 48l10.400-18z" fill="#fbbc04" /><path d="M24 24L34.400 30 24 48A24 24 0 0 1 3.200 12l10.400 18z" fill="#2a9a46" />
        <path d="M24 12h20.800l-10 14z" fill="#fbbc04" /><path d="M3.200 12L13.600 30l4-16z" fill="#2a9a46" /><path d="M3.200 12A24 24 0 0 1 44.800 12H24L12 17z" fill="#ea4335" />
        <circle cx="24" cy="24" r="12" fill="#fff" /><circle cx="24" cy="24" r="9.500" fill="#3e7ff0" />
      </Svg>
    ),
  },
  {
    icon: (
      <Svg w={46}>
        <circle cx="23" cy="23" r="20.500" fill="#1f1e20" stroke="#f0f0f0" strokeWidth="2.500" />
        {[0, 120, 240].map((a) => <path key={a} transform={`rotate(${a} 23 23)`} d="M23 23c-7-2-11-8-7-17-1 7 2 12 7 13 2 1 3 3 0 4z" fill="#d0d0d2" />)}
      </Svg>
    ),
  },
  {
    icon: (
      <Svg w={48}>
        <rect width="48" height="48" rx="8" fill="#1d3c4c" /><path d="M0 36h48v4q0 8-8 8H8q-8 0-8-8z" fill="#45596a" /><path d="M20 5l6 6-6 7-5-7z" fill="#fff" /><path d="M29 12l5 6-13 13-5-6z" fill="#4fe3c1" />
        <path d="M18.500 40l2.500 4 3-4 3 4 2.500-4" stroke="#fff" strokeWidth="2.400" />
      </Svg>
    ),
  },
  { icon: <Svg w={44}><rect x="1" y="1" width="42" height="42" rx="8" fill="#fff" /><path d="M36 12.500L12 28v4h18v-4M36 31.500L12 16v-4h18v4" stroke="#0a0a0a" strokeWidth="3.600" /></Svg> },
  {
    icon: (
      <span className="relative block">
        <FaWhatsapp size={54} color="#25d366" className="-m-[3px]" />
        <span className={`absolute -top-[10px] left-[26px] flex size-8 items-center justify-center rounded-full bg-[#5ccbff] text-[22px] text-black ${UI}`}>1</span>
      </span>
    ),
  },
  {
    icon: (
      <Svg w={48}>
        <defs><radialGradient id="wav"><stop offset="0.200" stopColor="#ff5a00" /><stop offset="0.700" stopColor="#f2b211" /><stop offset="1" stopColor="#b79b1c" /></radialGradient></defs>
        <path d="M11 36l1-11 2 2 1-7 2 4 2-6 2 3 3-6 2 6 2-4 2 6 2-2 1 7 2-3 1 13-3 3-3-2-2 4-3-3-3 2-3-3-3 1z" fill="url(#wav)" /><path d="M11 28l4-1 3 3 4-4 4 5 4-4 7 2v3l-6 2-5-2-6 2-4-2-5 1z" fill="#ff1c00" />
        <path d="M6 30C4-7 44-7 42 30" stroke="#0d10ef" strokeWidth="3.500" /><path d="M9 25v17H5q-5-4-5-9 1-6 5-8zM39 25v17h4q5-4 5-9-1-6-5-8z" fill="#0a0ce0" />
      </Svg>
    ),
  },
  { icon: <Svg w={48}><rect width="48" height="47" rx="8" fill="#100c1c" /><rect x="9" y="7" width="9" height="33" fill="#a855f7" /><rect x="36" y="7" width="3" height="33" fill="#a855f7" /><circle cx="27" cy="23.500" r="8" fill="#a855f7" /></Svg> },
  {
    dot: true,
    icon: (
      <Svg w={48}>
        <path d="M1 31q-2 2 0 3l2 2q1.500 1 3 0L37 13V0z" fill="#0076b9" /><path d="M1 17q-2-2 0-3l2-2q1.500-1 3 0l31 24v12z" fill="#0b8fdb" /><path d="M36 0l12 6v36l-12 6V0z" fill="#26a5f3" />
      </Svg>
    ),
  },
];

function Taskbar() {
  return (
    <footer className={`flex h-24 bg-[#10244c] pl-8 ${UI}`}>
      <div className="flex w-[323px] shrink-0 items-center">
        <Svg w={48} h={44}><rect width="48" height="44" rx="3" fill="#0a67bd" /><rect x="3.500" y="4" width="19" height="36" rx="2" fill="#f7f7f7" /><rect x="26" y="4" width="18.500" height="20" fill="#6bd8ff" /><rect x="26" y="24" width="18.500" height="8" fill="#1aa0f8" /><rect x="26" y="32" width="18.500" height="8" fill="#0786ee" /></Svg>
      </div>
      {slots.map((s, i) => (
        <div key={i} className="flex w-[88.050px] shrink-0 items-center justify-center">
          <div className={s.active ? 'relative flex size-20 items-center justify-center rounded-lg border border-[#2f4164] bg-[#202f57]' : 'relative flex size-20 items-center justify-center'}>
            {s.icon}
            {s.dot && <span className="absolute bottom-[2px] h-[6px] w-3 rounded-full bg-[#9aa1b3]" />}
            {s.active && <span className="absolute bottom-[1px] h-[6px] w-8 rounded-full bg-[#5ccbff]" />}
          </div>
        </div>
      ))}
      <div className="ml-[45px] flex items-center">
        <Svg w={26} h={16} stroke="#fff" sw={2}><path d="M1 14.500L13 2l12 12.500" /></Svg>
        <span className="ml-[34px]">
          <Svg w={34} h={32}><path d="M8 14C8 0 27 0 27 14z" fill="#8b93a6" /><path d="M7 22a7 7 0 0 1-1-13 10 10 0 0 1 16 3v10z" fill="#ccd0d8" /><circle cx="24" cy="20" r="9" fill="#5ccbff" /><path d="M24 18v7M24 14v2.500" stroke="#0a0a0a" strokeWidth="2.400" /></Svg>
        </span>
        <span className="ml-[31px]">
          <Svg w={34} h={34} stroke="#fff" sw={2}><path d="M1 18C1 0 20-3 29 10M29 1v9h-9M3 31v-8h9M3 24c4 6 8 8 13 8" /><circle cx="24" cy="25" r="8" fill="#f00" stroke="none" /></Svg>
        </span>
        <span className="ml-[29px]">
          <Svg w={34} h={26} stroke="#fff" sw={2.200}><path d="M1 11q16-17 32 0M6 16q11-12 22 0M11 20.500q6-7 12 0" /><circle cx="17" cy="22.500" r="3" fill="#fff" stroke="none" /></Svg>
        </span>
        <span className="ml-[14px]">
          <Svg w={34} h={28} stroke="#fff" sw={2}><path d="M1 10h6l7-7v22l-7-7H1zM18 9.500q3 4.500 0 9M22 5.500q6 8.500 0 17M26.500 2q9 12 0 24" /></Svg>
        </span>
      </div>
      <div className="mr-[15px] ml-auto w-[120px] self-center pb-[2px] text-right text-[24px] leading-8 tracking-[-0.500px] text-white">
        <div>2:43 AM</div>
        <div>7/6/2025</div>
      </div>
      <span className="mr-10 flex size-8 items-center justify-center self-center rounded-full bg-[#5ccbff] text-[21px] text-black">4</span>
    </footer>
  );
}

export default function App() {
  return (
    <div className="flex h-[1440px] w-[2560px] flex-col overflow-hidden bg-white">
      <TabStrip />
      <Toolbar />
      <EditorBar />
      <div className="flex h-[1098px]">
        <Panel />
        <Canvas />
        <Scrollbar />
      </div>
      <Taskbar />
    </div>
  );
}
